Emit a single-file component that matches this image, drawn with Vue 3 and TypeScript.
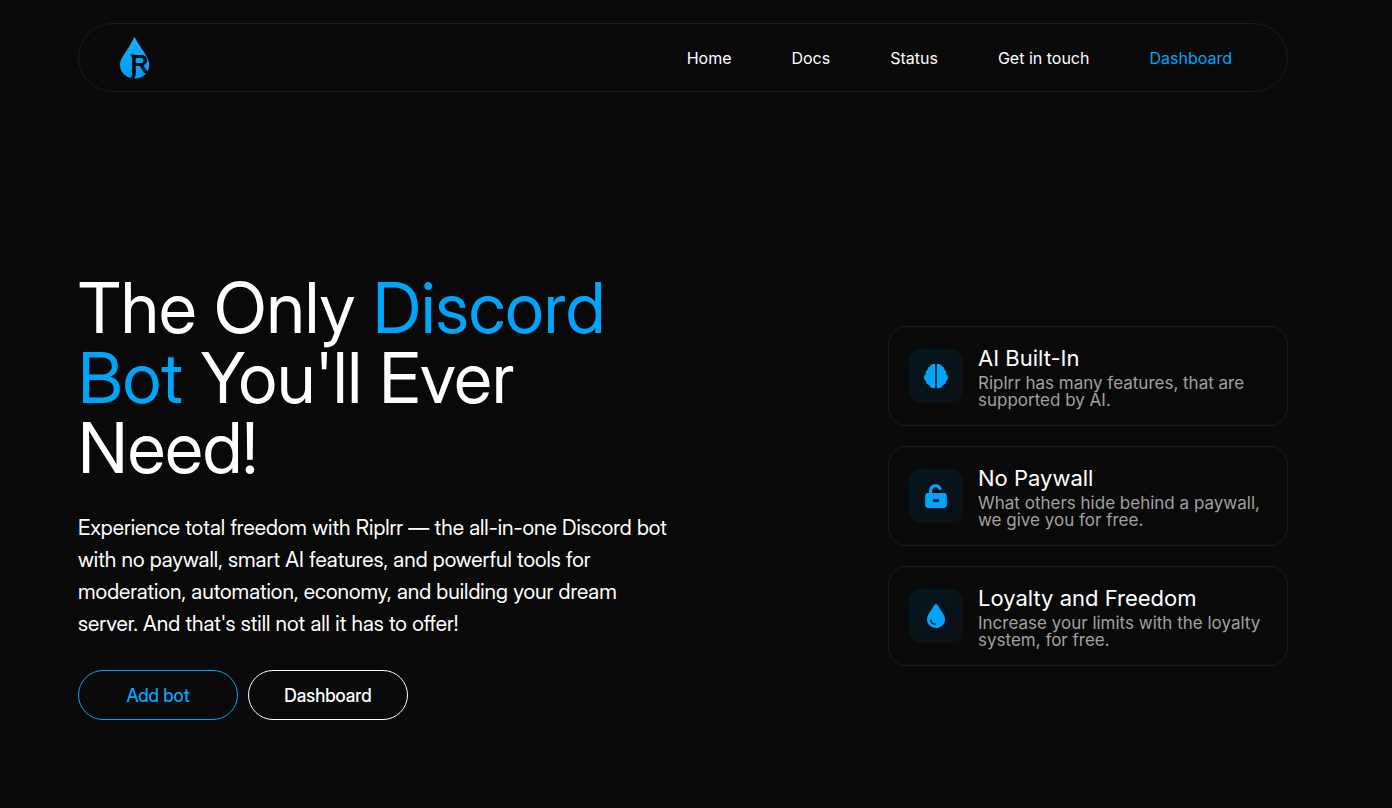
<script setup lang="ts">
type IconName = 'brain' | 'unlock' | 'drop'

interface NavLink {
  label: string
  href: string
  accent?: boolean
}

interface Feature {
  icon: IconName
  title: string
  text: string
}

const links: NavLink[] = [
  { label: 'Home', href: '#home' },
  { label: 'Docs', href: '#docs' },
  { label: 'Status', href: '#status' },
  { label: 'Get in touch', href: '#contact' },
  { label: 'Dashboard', href: '#dashboard', accent: true },
]

const features: Feature[] = [
  { icon: 'brain', title: 'AI Built-In', text: 'Riplrr has many features, that are supported by AI.' },
  { icon: 'unlock', title: 'No Paywall', text: 'What others hide behind a paywall, we give you for free.' },
  { icon: 'drop', title: 'Loyalty and Freedom', text: 'Increase your limits with the loyalty system, for free.' },
]
</script>

<template>
  <div class="page">
    <header class="navbar">
      <a class="brand" href="#home" aria-label="Riplrr">
        <svg class="logo" viewBox="0 0 30 42" aria-hidden="true">
          <defs>
            <linearGradient id="logo-fill" x1="0" y1="0" x2="0" y2="1">
              <stop offset="0" stop-color="#16b0fa" />
              <stop offset="1" stop-color="#009aff" />
            </linearGradient>
          </defs>
          <path fill="url(#logo-fill)" d="M14.500 0C17 5 21 10.500 24.500 16C27.500 20.500 29.200 23.500 29.200 27.500C29.200 35.800 23 41.500 14.800 41.500C6.500 41.500 0 35.800 0 27.500C0 23.500 2 20.500 5 16C8.500 10.500 12 5 14.500 0Z" />
          <text class="logo-letter" x="10.400" y="35.500">R</text>
          <path class="logo-cut" d="M10.200 17.600H15V20.400H12.500Q11.300 20 10.200 17.600ZM12.200 33.500H15.800V36C15.800 39 15 41 12.600 42.500L8.800 41.500C11.400 40.500 12.200 39 12.200 36ZM23.500 34.500L27.300 33.500L29.500 36L27.500 38.500Z" />
        </svg>
      </a>
      <nav class="links" aria-label="Main">
        <a v-for="link in links" :key="link.label" :href="link.href" :class="{ accent: link.accent }">{{ link.label }}</a>
      </nav>
    </header>

    <main class="hero">
      <section class="intro">
        <h1>The Only <span class="accent">Discord Bot</span> You'll Ever Need!</h1>
        <p>
          Experience total freedom with Riplrr — the all-in-one Discord bot with no paywall, smart AI
          features, and powerful tools for moderation, automation, economy, and building your dream
          server. And that's still not all it has to offer!
        </p>
        <div class="actions">
          <button type="button" class="accent">Add bot</button>
          <button type="button">Dashboard</button>
        </div>
      </section>

      <section class="features" aria-label="Features">
        <article v-for="feature in features" :key="feature.title" class="card">
          <div class="tile">
            <svg v-if="feature.icon === 'brain'" viewBox="0 0 24 24" aria-hidden="true">
              <path d="M11.200 0V24H9.200C7.200 24 5.700 22.800 5.200 21C3.200 20.700 1.900 19.200 2 17.200C.7 16.400 0 15 0 13.500C0 12 .8 10.700 2 10C1.300 8.300 2 6.500 3.500 5.700C3.500 3.800 4.600 2.500 6.200 2.200C6.700.8 7.900 0 9.200 0Z" />
              <path d="M12.800 0V24H14.800C16.800 24 18.300 22.800 18.800 21C20.800 20.700 22.100 19.200 22 17.200C23.300 16.400 24 15 24 13.500C24 12 23.200 10.700 22 10C22.700 8.300 22 6.500 20.500 5.700C20.500 3.800 19.400 2.500 17.800 2.200C17.300.8 16.100 0 14.800 0Z" />
            </svg>
            <svg v-else-if="feature.icon === 'unlock'" viewBox="0 0 24 24" aria-hidden="true">
              <path d="M6.600 10V6.500A4.900 4.900 0 0 1 16 4.700" fill="none" stroke="currentColor" stroke-width="3" stroke-linecap="round" />
              <path fill-rule="evenodd" d="M4.200 9H19.800A3 3 0 0 1 22.800 12V21A3 3 0 0 1 19.800 24H4.200A3 3 0 0 1 1.200 21V12A3 3 0 0 1 4.200 9ZM10.300 15A1.400 1.400 0 0 0 10.300 18H13.700A1.400 1.400 0 0 0 13.700 15Z" />
            </svg>
            <svg v-else viewBox="0 0 24 24" aria-hidden="true">
              <path fill-rule="evenodd" d="M12 0C12.700 0 13.300.4 13.600 1C15.500 4.800 21 10.500 21 15.500C21 20.300 17 24 12 24S3 20.300 3 15.500C3 10.500 8.500 4.800 10.400 1C10.700.4 11.300 0 12 0ZM7.500 15.800A.8.800 0 0 0 6 15.800C6 18.700 8.500 21 11.400 21A.75.75 0 0 0 11.400 19.500C9.200 19.500 7.500 17.900 7.500 15.800Z" />
            </svg>
          </div>
          <div class="copy">
            <h2>{{ feature.title }}</h2>
            <p>{{ feature.text }}</p>
          </div>
        </article>
      </section>
    </main>
  </div>
</template>

<style>
body {
  margin: 0;
  background: #090909;
}
</style>

<style scoped>
.page {
  box-sizing: border-box;
  min-height: 100vh;
  padding: 23px 104px 88px 78px;
  display: flex;
  flex-direction: column;
  background: #090909;
  color: #fff;
  font-family: Inter, "Liberation Sans", sans-serif;
}

.accent {
  color: #00a5f9;
}

.navbar {
  display: flex;
  align-items: center;
  justify-content: space-between;
  gap: 40px;
  padding: 13px 55px 12px 41px;
  border: 1px solid #191c1c;
  border-radius: 35px;
}

.brand {
  display: flex;
}

.logo {
  display: block;
  width: 30px;
  height: 42px;
  overflow: visible;
}

.logo-letter {
  fill: #090909;
  font: 700 25px "Liberation Sans", sans-serif;
}

.logo-cut {
  fill: #090909;
}

.links {
  display: flex;
  gap: 60px;
}

.links a {
  font-size: 16px;
  line-height: 20px;
  color: #fff;
  text-decoration: none;
}

.links a.accent {
  color: #00a5f9;
}

.hero {
  flex: 1;
  display: flex;
  align-items: flex-end;
  justify-content: space-between;
  gap: 60px;
}

.intro {
  flex: 0 1 600px;
}

h1 {
  margin: 0 0 29px;
  font-family: "Inter Display", Inter, "Liberation Sans", sans-serif;
  font-size: 70px;
  line-height: 70px;
  font-weight: 400;
}

.intro p {
  margin: 0 0 30px;
  font-family: "Inter Display", Inter, "Liberation Sans", sans-serif;
  font-size: 21px;
  line-height: 32px;
}

.actions {
  display: flex;
  gap: 10px;
}

button {
  width: 160px;
  height: 50px;
  padding: 0;
  border: 1px solid currentColor;
  border-radius: 25px;
  background: transparent;
  color: #fff;
  font: 500 18px "Inter Display", Inter, "Liberation Sans", sans-serif;
  cursor: pointer;
}

button.accent {
  color: #00a5f9;
}

.features {
  flex: 0 0 400px;
  display: flex;
  flex-direction: column;
  gap: 20px;
  margin-bottom: 54px;
}

.card {
  box-sizing: border-box;
  min-height: 100px;
  padding: 16px 20px;
  display: flex;
  align-items: center;
  gap: 15px;
  border: 1px solid #191c1c;
  border-radius: 18px;
}

.tile {
  flex: none;
  display: grid;
  place-items: center;
  width: 54px;
  height: 54px;
  border-radius: 12px;
  background: linear-gradient(135deg, #05171f, #0a0f15);
  color: #00a5f9;
}

.tile svg {
  width: 24px;
  height: 24px;
  fill: currentColor;
}

.copy h2 {
  margin: 0 0 3px;
  font-size: 22px;
  line-height: 28px;
  font-weight: 400;
}

.copy p {
  margin: 0;
  font-size: 17px;
  line-height: 17px;
  color: #a0a0a0;
}
</style>
